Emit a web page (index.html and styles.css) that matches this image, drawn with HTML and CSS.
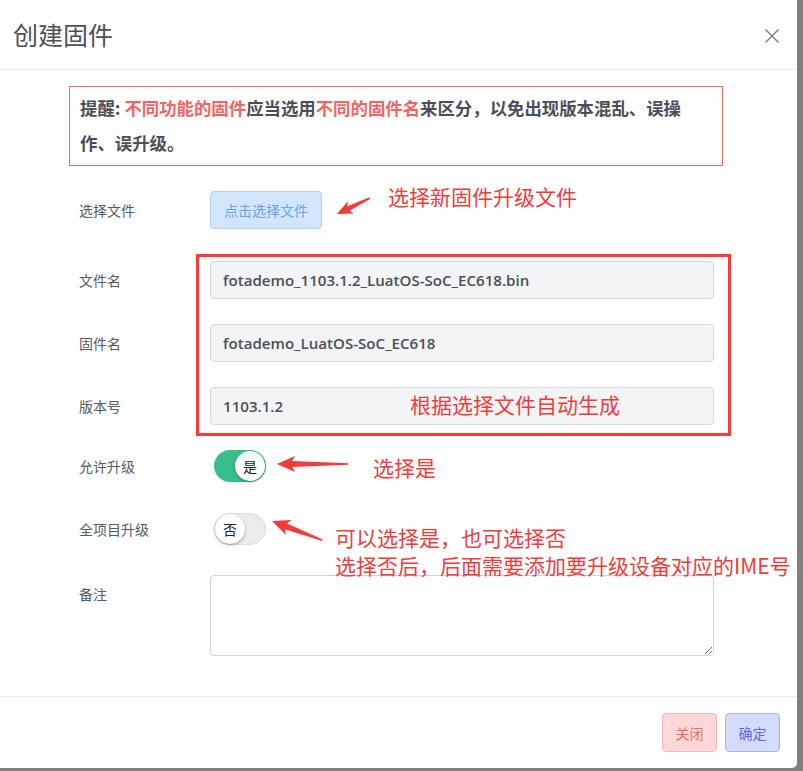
FILE: index.html
```html
<!DOCTYPE html>
<html lang="zh-CN">
<head>
<meta charset="utf-8">
<title>创建固件</title>
<link rel="stylesheet" href="styles.css">
</head>
<body>
<div class="modal">
  <header class="modal-header">
    <h1 class="modal-title">创建固件</h1>
    <button class="close-btn" type="button" aria-label="关闭">
      <svg width="14" height="14" viewBox="0 0 14 14"><path d="M0.5 0.5 L13.5 13.5 M13.5 0.5 L0.5 13.5" stroke="#7d7d7d" stroke-width="1.4" fill="none"/></svg>
    </button>
  </header>

  <div class="modal-body">
    <p class="notice">提醒: <span class="hl">不同功能的固件</span>应当选用<span class="hl">不同的固件名</span>来区分，以免出现版本混乱、误操作、误升级。</p>

    <div class="form">
      <div class="row row-file">
        <label class="lbl">选择文件</label>
        <div class="ctrl"><button class="btn-file" type="button">点击选择文件</button></div>
      </div>
      <div class="row row-input first-input">
        <label class="lbl">文件名</label>
        <div class="ctrl"><input class="field" readonly value="fotademo_1103.1.2_LuatOS-SoC_EC618.bin"></div>
      </div>
      <div class="row row-input">
        <label class="lbl">固件名</label>
        <div class="ctrl"><input class="field" readonly value="fotademo_LuatOS-SoC_EC618"></div>
      </div>
      <div class="row row-input">
        <label class="lbl">版本号</label>
        <div class="ctrl"><input class="field" readonly value="1103.1.2"></div>
      </div>
      <div class="row row-switch">
        <label class="lbl">允许升级</label>
        <div class="ctrl"><div class="switch on"><span class="knob">是</span></div></div>
      </div>
      <div class="row row-switch second-switch">
        <label class="lbl">全项目升级</label>
        <div class="ctrl"><div class="switch off"><span class="knob">否</span></div></div>
      </div>
      <div class="row row-text">
        <label class="lbl lbl-top">备注</label>
        <div class="ctrl"><textarea class="memo"></textarea></div>
      </div>
    </div>
  </div>

  <footer class="modal-footer">
    <button class="btn btn-close" type="button">关闭</button>
    <button class="btn btn-ok" type="button">确定</button>
  </footer>

  <div class="anno-box"></div>
  <div class="anno anno-file">选择新固件升级文件</div>
  <div class="anno anno-auto">根据选择文件自动生成</div>
  <div class="anno anno-yes">选择是</div>
  <div class="anno anno-all">可以选择是，也可选择否<br>选择否后，后面需要添加要升级设备对应的IME号</div>

  <svg class="anno-arrows" width="803" height="771" viewBox="0 0 803 771">
    <g fill="#f23b3b">
      <polygon transform="translate(337 214) rotate(-25.9) scale(0.85)" points="0,0 18,-8 15,-3 43,-1 43,1 15,3 18,8"/>
      <polygon transform="translate(277 464)" points="0,0 18,-8 15,-3 71,-0.8 71,0.8 15,3 18,8"/>
      <polygon transform="translate(272 521) rotate(21)" points="0,0 18,-8 15,-3 54,-0.8 54,0.8 15,3 18,8"/>
    </g>
  </svg>
</div>
</body>
</html>
```

FILE: styles.css
```css
html, body {
  margin: 0;
  padding: 0;
}
body {
  width: 803px;
  height: 771px;
  background: #7f7f7f;
  font-family: "Noto Sans CJK SC", "Noto Sans", sans-serif;
  overflow: hidden;
}
.modal {
  position: relative;
  width: 797px;
  height: 768px;
  background: #fff;
  border-bottom-right-radius: 5px;
  display: flex;
  flex-direction: column;
}
.modal-header {
  height: 69px;
  border-bottom: 1px solid #eceef1;
  display: flex;
  align-items: center;
  justify-content: space-between;
  padding: 0 18px 0 13px;
}
.modal-title {
  margin: 0;
  font-size: 25px;
  font-weight: 400;
  color: #4b5059;
  line-height: 1;
}
.close-btn {
  border: 0;
  background: none;
  padding: 0;
  width: 14px;
  height: 14px;
  display: block;
  margin-top: 2px;
}
.close-btn svg { display: block; }

.modal-body {
  flex: 1;
  padding: 16px 0 0 69px;
}
.notice {
  margin: 0;
  width: 654px;
  box-sizing: border-box;
  border: 1px solid #f36a6a;
  padding: 3px 18px 5px 10px;
  font-size: 17.4px;
  font-weight: 700;
  line-height: 35px;
  color: #4a4f57;
}
.notice .hl { color: #f56464; }

.form {
  display: flex;
  flex-direction: column;
  padding-left: 10px;
}
.row {
  display: flex;
  align-items: center;
}
.lbl {
  width: 131px;
  flex: none;
  font-size: 14px;
  color: #565a61;
  line-height: 20px;
}
.lbl-top {
  align-self: flex-start;
  padding-top: 9px;
}
.ctrl {
  width: 504px;
  display: flex;
}
.row-file { margin-top: 25px; height: 38px; }
.row-input { margin-top: 25px; height: 38px; }
.row-input.first-input { margin-top: 32px; }
.row-switch { margin-top: 25px; height: 32px; }
.row-switch.second-switch { margin-top: 31px; }
.row-text { margin-top: 30px; }

.btn-file {
  height: 38px;
  width: 112px;
  box-sizing: border-box;
  background: #d3e6fb;
  border: 1px solid #abd1f6;
  border-radius: 4px;
  color: #5fa7ee;
  font-family: "Noto Sans CJK SC", sans-serif;
  font-size: 14px;
  padding: 0;
}
.field {
  width: 504px;
  height: 38px;
  box-sizing: border-box;
  background: #f3f4f6;
  border: 1px solid #d4d7dd;
  border-radius: 4px;
  padding: 0 12px;
  font-family: "Open Sans", "Noto Sans CJK SC", sans-serif;
  font-size: 15.1px;
  font-weight: 600;
  color: #4a4f57;
  outline: none;
}
.switch {
  width: 52px;
  height: 32px;
  box-sizing: border-box;
  border-radius: 16px;
  display: flex;
  align-items: center;
  margin-left: 4px;
}
.switch.on {
  background: #36bf8a;
  justify-content: flex-end;
  padding: 0 1px;
}
.switch.off {
  background: #ececec;
  border: 1px solid #dcdcdc;
  justify-content: flex-start;
  padding: 0;
}
.knob {
  width: 30px;
  height: 30px;
  border-radius: 50%;
  background: #fff;
  box-shadow: 0 1px 3px rgba(0, 0, 0, 0.35);
  display: flex;
  align-items: center;
  justify-content: center;
  font-size: 14px;
  color: #222;
  line-height: 1;
}
.memo {
  width: 504px;
  height: 81px;
  box-sizing: border-box;
  border: 1px solid #cfd2d8;
  border-radius: 4px;
  background: #fff;
  resize: vertical;
  margin: 0;
  display: block;
}

.modal-footer {
  height: 72px;
  box-sizing: border-box;
  border-top: 1px solid #eceef1;
  display: flex;
  justify-content: flex-end;
  align-items: flex-start;
  gap: 8px;
  padding: 16px 17px 0 0;
}
.btn {
  width: 55px;
  height: 39px;
  box-sizing: border-box;
  border-radius: 4px;
  font-family: "Noto Sans CJK SC", sans-serif;
  font-size: 14px;
  padding: 0;
}
.btn-close {
  background: #fdd8d8;
  border: 1px solid #f8b6b6;
  color: #f36969;
}
.btn-ok {
  background: #d5dbfa;
  border: 1px solid #abb5f1;
  color: #5a6ce0;
}

/* annotation overlay */
.anno-box {
  position: absolute;
  left: 196px;
  top: 254px;
  width: 535px;
  height: 182px;
  box-sizing: border-box;
  border: 3px solid #fb3b3b;
  pointer-events: none;
}
.anno {
  position: absolute;
  font-family: "Noto Sans CJK SC", sans-serif;
  font-size: 21px;
  line-height: 28px;
  color: #f23b3b;
  white-space: nowrap;
}
.anno-file { left: 388px; top: 182px; }
.anno-auto { left: 410px; top: 390px; }
.anno-yes { left: 373px; top: 453px; }
.anno-all { left: 335px; top: 523px; }
.anno-arrows {
  position: absolute;
  left: 0;
  top: 0;
  pointer-events: none;
}
```
